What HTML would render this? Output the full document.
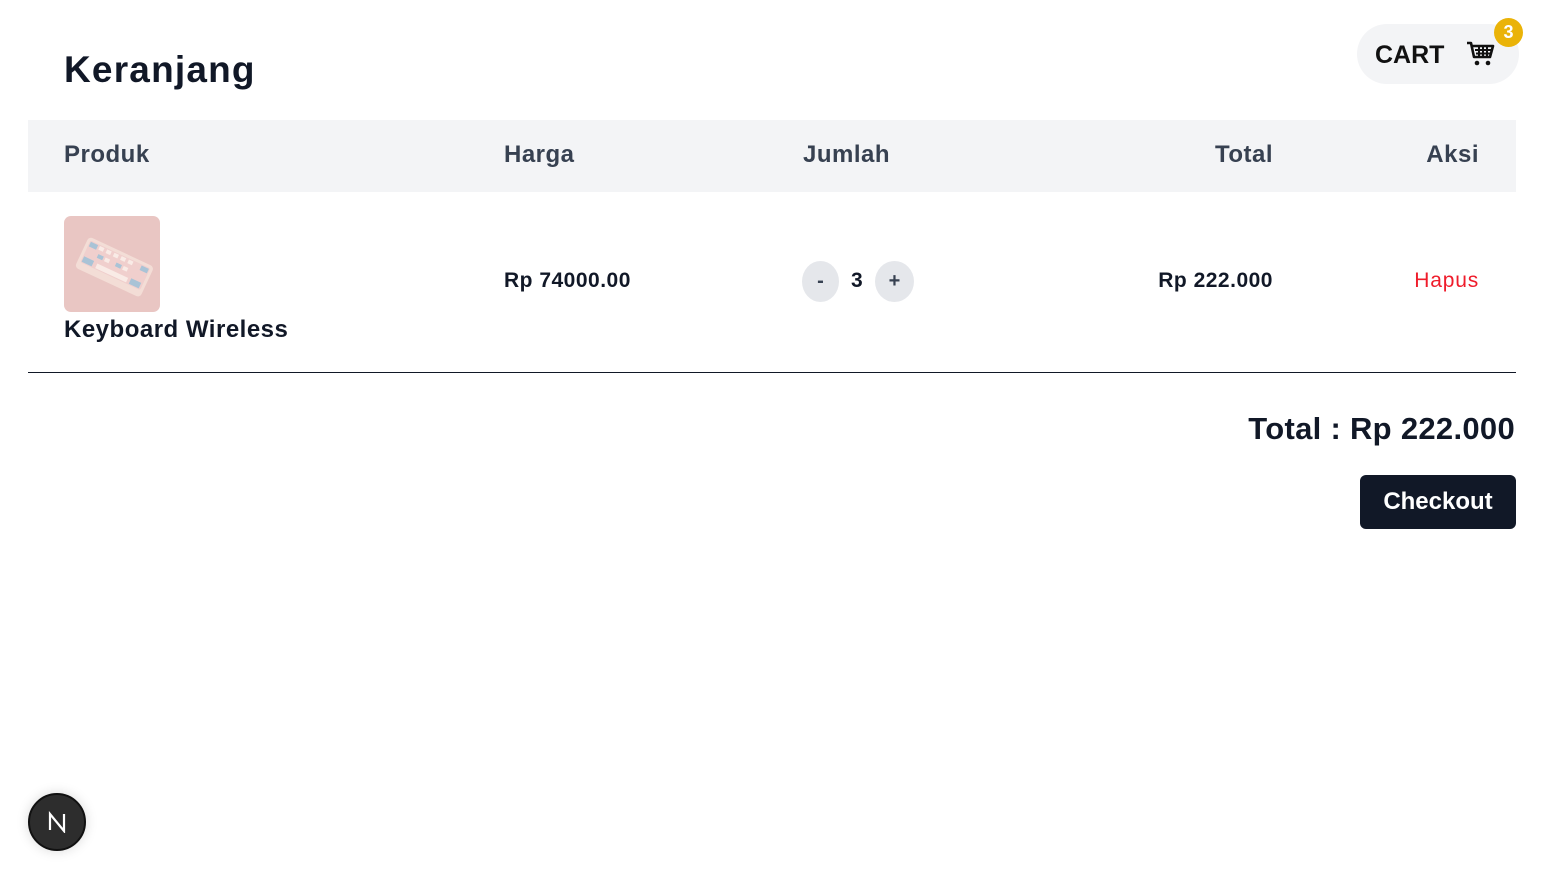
<!DOCTYPE html>
<html><head><meta charset="utf-8"><style>
*{margin:0;padding:0;box-sizing:border-box}
body{width:1544px;height:878px;background:#fff;font-family:"Liberation Sans",sans-serif;color:#111827;position:relative;overflow:hidden}
.abs{position:absolute}
h1{position:absolute;left:64px;top:49px;font-size:37px;font-weight:700;letter-spacing:1.2px}
.pill{left:1357px;top:24px;width:162px;height:60px;border-radius:30px;background:#f3f4f6}
.pill span{position:absolute;left:18px;top:17px;font-size:25px;font-weight:700;color:#111}
.badge{left:1494px;top:18px;width:29px;height:29px;border-radius:50%;background:#eab308;color:#fff;font-weight:700;font-size:18px;text-align:center;line-height:29px}
.thead{left:28px;top:120px;width:1488px;height:72px;background:#f3f4f6}
.th{top:141px;font-size:24px;font-weight:700;color:#374151;letter-spacing:0.5px}
.row{left:28px;top:372px;width:1488px;height:1px;background:#111827}
.td{font-size:21px;font-weight:700;letter-spacing:0.5px}
.qb{width:37px;height:41px;border-radius:50%;background:#e5e7eb;text-align:center;line-height:41px;font-weight:700;font-size:20px;color:#374151}
</style></head><body>
<h1>Keranjang</h1>
<div class="abs pill"><span>CART</span>
<svg class="abs" style="left:108px;top:16px" width="32" height="28" viewBox="0 0 32 28"><path d="M2 3h4l3 14h16l3-11H7" fill="none" stroke="#111" stroke-width="2.6" stroke-linejoin="round"/><path d="M10 10h17M11 13.5h15M14 6v11M18 6v11M22 6v11" stroke="#111" stroke-width="2"/><circle cx="12" cy="23" r="2.3" fill="#111"/><circle cx="23" cy="23" r="2.3" fill="#111"/></svg>
</div>
<div class="abs badge">3</div>
<div class="abs thead"></div>
<div class="abs th" style="left:64px">Produk</div>
<div class="abs th" style="left:504px">Harga</div>
<div class="abs th" style="left:803px">Jumlah</div>
<div class="abs th" style="right:271px">Total</div>
<div class="abs th" style="right:65px">Aksi</div>
<svg class="abs" style="left:64px;top:216px" width="96" height="96" viewBox="0 0 96 96"><rect width="96" height="96" rx="7" fill="#e9c6c3"/><g transform="rotate(25 50 52)"><rect x="14" y="34" width="72" height="34" rx="4" fill="#f3ddd6"/><rect x="17" y="37" width="66" height="24" rx="2" fill="#f0cfcd"/><g fill="#a9c3d6"><rect x="18" y="38" width="8" height="5"/><rect x="74" y="38" width="8" height="5"/><rect x="18" y="54" width="11" height="6"/><rect x="70" y="54" width="11" height="6"/><rect x="50" y="46" width="6" height="4"/><rect x="30" y="46" width="6" height="4"/></g><g fill="#f9ebe6"><rect x="28" y="38" width="5" height="4"/><rect x="36" y="38" width="5" height="4"/><rect x="44" y="38" width="5" height="4"/><rect x="52" y="38" width="5" height="4"/><rect x="60" y="38" width="5" height="4"/><rect x="38" y="46" width="5" height="4"/><rect x="58" y="46" width="5" height="4"/><rect x="33" y="55" width="34" height="5"/></g></g></svg>
<div class="abs td" style="left:64px;top:316px;font-size:24px">Keyboard Wireless</div>
<div class="abs td" style="left:504px;top:269px">Rp 74000.00</div>
<div class="abs qb" style="left:802px;top:261px">-</div>
<div class="abs td" style="left:851px;top:269px">3</div>
<div class="abs qb" style="left:875px;top:261px;width:39px">+</div>
<div class="abs td" style="right:271px;top:269px">Rp 222.000</div>
<div class="abs td" style="right:65px;top:269px;color:#ef1c2b;font-weight:400;letter-spacing:0.8px">Hapus</div>
<div class="abs row"></div>
<div class="abs" style="right:29px;top:411px;font-size:31px;font-weight:700;letter-spacing:0.3px">Total : Rp 222.000</div>
<div class="abs" style="left:1360px;top:475px;width:156px;height:54px;background:#111827;border-radius:6px;color:#fff;font-size:24px;font-weight:700;text-align:center;line-height:54px">Checkout</div>
<div class="abs" style="left:28px;top:793px;width:58px;height:58px;border-radius:50%;background:#2d2d2d;border:2px solid #111;box-shadow:0 0 12px rgba(0,0,0,.15)">
<svg class="abs" style="left:16px;top:16px" width="22" height="22" viewBox="0 0 22 22"><path d="M4 19V3l14 17V3" fill="none" stroke="#fff" stroke-width="2.2"/></svg></div>
</body></html>
